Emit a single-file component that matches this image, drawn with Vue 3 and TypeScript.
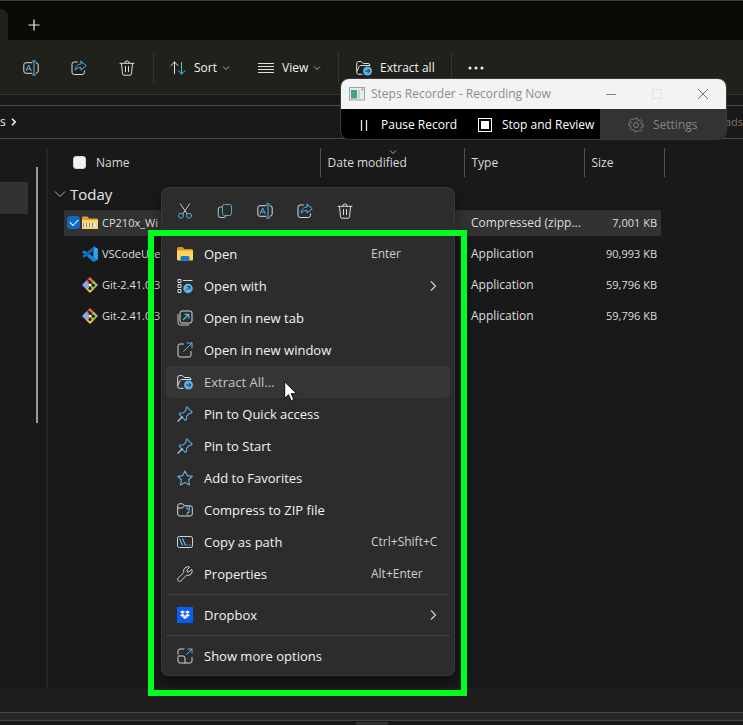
<script setup lang="ts">
import { ref } from 'vue'

interface FileRow {
  name: string
  icon: string
  type: string
  size: string
}

interface MenuEntry {
  label: string
  icon: string
  shortcut?: string
  submenu?: boolean
}

const files: FileRow[] = [
  { name: 'CP210x_Wi', icon: 'zip', type: 'Compressed (zipp...', size: '7,001 KB' },
  { name: 'VSCodeUse', icon: 'vscode', type: 'Application', size: '90,993 KB' },
  { name: 'Git-2.41.0.3', icon: 'git', type: 'Application', size: '59,796 KB' },
  { name: 'Git-2.41.0.3', icon: 'git', type: 'Application', size: '59,796 KB' },
]

const quickActions = [
  { label: 'Cut', icon: 'cut' },
  { label: 'Copy', icon: 'copy' },
  { label: 'Rename', icon: 'rename' },
  { label: 'Share', icon: 'share' },
  { label: 'Delete', icon: 'trash' },
]

const groups: MenuEntry[][] = [
  [
    { label: 'Open', icon: 'folder', shortcut: 'Enter' },
    { label: 'Open with', icon: 'openwith', submenu: true },
    { label: 'Open in new tab', icon: 'newtab' },
    { label: 'Open in new window', icon: 'newwindow' },
    { label: 'Extract All...', icon: 'extract' },
    { label: 'Pin to Quick access', icon: 'pin' },
    { label: 'Pin to Start', icon: 'pin' },
    { label: 'Add to Favorites', icon: 'star' },
    { label: 'Compress to ZIP file', icon: 'compress' },
    { label: 'Copy as path', icon: 'path', shortcut: 'Ctrl+Shift+C' },
    { label: 'Properties', icon: 'wrench', shortcut: 'Alt+Enter' },
  ],
  [{ label: 'Dropbox', icon: 'dropbox', submenu: true }],
  [{ label: 'Show more options', icon: 'more' }],
]

const activeItem = ref('Extract All...')
const selected = ref(0)
</script>

<template>
  <div class="explorer">
    <svg class="sprite" aria-hidden="true">
      <symbol id="i-rename" viewBox="0 0 16 16" fill="none" stroke-linecap="round">
        <path d="M9 2.7H3A2.2 2.2 0 0 0 .8 5v6A2.2 2.2 0 0 0 3 13.3h6M13 2.7a2.2 2.2 0 0 1 2.2 2.3v6a2.2 2.2 0 0 1-2.2 2.3" stroke="#d8dcde" />
        <path d="M3.2 10.7 5.7 5l2.5 5.7M4.1 9h3.2M11 .9v14.2M9.6.9h2.8M9.6 15.1h2.8" stroke="#58b4ea" />
      </symbol>
      <symbol id="i-share" viewBox="0 0 16 16" fill="none" stroke-linejoin="round" stroke-linecap="round">
        <path d="M6.3 2H3.2A2.2 2.2 0 0 0 1 4.2v8A2.2 2.2 0 0 0 3.2 14.5h8a2.2 2.2 0 0 0 2.2-2.2v-1.5" stroke="#d8dcde" />
        <path d="M10 1.2 15.2 5.7 10 10V7.5C7.4 7.4 5.6 8.2 4.2 10.2 4.5 6.6 6.3 4.2 10 3.9z" stroke="#58b4ea" />
      </symbol>
      <symbol id="i-trash" viewBox="0 0 16 16" fill="none" stroke="#dcdcdc" stroke-linecap="round">
        <path d="M1 3.3h14M5.7 3.2a2.3 2.3 0 0 1 4.6 0M2.5 3.5l1 10.3c.1.9.7 1.4 1.5 1.4h6c.8 0 1.4-.5 1.5-1.4l1-10.3M6.5 6.5v5.2M9.5 6.5v5.2" />
      </symbol>
      <symbol id="i-sort" viewBox="0 0 16 16" fill="none" stroke-linecap="round" stroke-linejoin="round">
        <path d="M4.5 13.5V2M1 5.5 4.5 2 8 5.5" stroke="#e4e4e4" />
        <path d="M11.5 2.5V14M8.5 10.8l3 3.2 3.5-3.2" stroke="#4cc2e8" />
      </symbol>
      <symbol id="i-lines" viewBox="0 0 16 16" stroke="#e0e0e0">
        <path d="M0 3.5h16M0 6.5h16M0 9.5h16M0 12.5h16" />
      </symbol>
      <symbol id="i-down" viewBox="0 0 8 8" fill="none" stroke="#a8a8a8">
        <path d="m1 2.5 3 3 3-3" />
      </symbol>
      <symbol id="i-right" viewBox="0 0 12 12" fill="none" stroke="#d0d0d0" stroke-width="1.2">
        <path d="m4 1.5 4.5 4.5L4 10.5" />
      </symbol>
      <symbol id="i-extract" viewBox="0 0 16 16" fill="none" stroke-linejoin="round">
        <path d="M6.5 14.3H2.7A2 2 0 0 1 .7 12.3V3.5a2 2 0 0 1 2-2h2.5l2 2H12a2 2 0 0 1 2 2M.8 11.5 3 6.7C3.3 5.9 4 5.5 4.7 5.5H14" stroke="#dedede" />
        <circle cx="11.5" cy="11" r="4.5" fill="#58b5ed" />
        <path d="M9 11h4.6M11.7 8.9l2.1 2.1-2.1 2.1" stroke="#17364c" />
      </symbol>
      <symbol id="i-cut" viewBox="0 0 16 16" fill="none" stroke-linecap="round">
        <path d="m3.3.8 7 10.2M12.7.8l-7 10.2" stroke="#c8c8c8" />
        <circle cx="4" cy="12.7" r="2.5" stroke="#55ace0" /><circle cx="12" cy="12.7" r="2.5" stroke="#55ace0" />
      </symbol>
      <symbol id="i-copy" viewBox="0 0 16 16" fill="none">
        <path d="M5.5 4H3.3A2 2 0 0 0 1.3 6v6.5a2 2 0 0 0 2 2H7a2 2 0 0 0 1.9-1.7" stroke="#bfc5c8" />
        <rect x="5.5" y="1.5" width="9" height="11" rx="2" stroke="#55a7cc" />
      </symbol>
      <symbol id="i-folder" viewBox="0 0 16 16">
        <path d="M0 2.5A1.5 1.5 0 0 1 1.5 1h4L7.5 3H14.5A1.5 1.5 0 0 1 16 4.5v9H0z" fill="#d99618" />
        <path d="M0 4.5h16v9a1 1 0 0 1-1 1H1a1 1 0 0 1-1-1z" fill="#ffd45b" />
        <path d="M3.5 14.5v-3A1.5 1.5 0 0 1 5 10h6a1.5 1.5 0 0 1 1.5 1.5v3z" fill="#1478d4" />
      </symbol>
      <symbol id="i-openwith" viewBox="0 0 16 16" fill="none">
        <path d="M1 1.5h3v3H1zM1 6.5h3v3H1zM1 11.5h3v3H1zM6 2.5h9.5" stroke="#dadada" />
        <circle cx="11" cy="10.5" r="4.7" fill="#5cb7eb" />
        <path d="M9 12.5 12.7 8.8M10 8.5h3v3" stroke="#193b50" />
      </symbol>
      <symbol id="i-newtab" viewBox="0 0 16 16" fill="none">
        <path d="M1 4v8.5a2.5 2.5 0 0 0 2.5 2.5H12" stroke="#c9c9c9" />
        <rect x="3" y="1" width="12" height="12" rx="2" stroke="#d8d8d8" />
        <path d="m6 10 5.5-5.5M7.5 4.3h4.2v4.2" stroke="#5bb8f0" stroke-width="1.2" />
      </symbol>
      <symbol id="i-newwindow" viewBox="0 0 16 16" fill="none" stroke-linecap="round">
        <path d="M6.5 2H3A2 2 0 0 0 1 4v9a2 2 0 0 0 2 2h9a2 2 0 0 0 2-2V9.5" stroke="#d4d4d4" />
        <path d="M6.5 9.5 15 1M10 1h5v5" stroke="#5bb8f0" />
      </symbol>
      <symbol id="i-pin" viewBox="0 0 16 16" fill="none" stroke-linejoin="round" stroke-linecap="round">
        <path d="m9.8.9 5.3 5.3-1.2 1.2-1.6.1-2.6 2.6-.2 3.2-1.2 1-6.1-6.1 1-1.2 3.2-.2L9 4.200l.100-1.600z" stroke="#5aa9da" stroke-width="1.2" />
        <path d="m5.3 10.800-4.500 4.400" stroke="#c8c8c8" stroke-width="1.2" />
      </symbol>
      <symbol id="i-star" viewBox="0 0 16 16" fill="none" stroke="#64abd2" stroke-linejoin="round">
        <path d="m8 .9 2.2 4.7 5.1.7-3.7 3.5.9 5.2L8 12.500 3.5 15l.9-5.2L.7 6.3l5.1-.7z" stroke-width="1.2" />
      </symbol>
      <symbol id="i-compress" viewBox="0 0 16 16" fill="none">
        <path d="M8.5 14H2.700a2 2 0 0 1-2-2V3.800a2 2 0 0 1 2-2h2.800l2 2h5.800a2 2 0 0 1 2 2V12a2 2 0 0 1-2 2H8.500M.8 6h4.500l2-2.200" stroke="#d8d8d8" />
        <path d="M10 4v3h2v3.500h-1.700V14M12.500 4v3" stroke="#5bb8f0" />
      </symbol>
      <symbol id="i-path" viewBox="0 0 16 16" fill="none">
        <rect x=".5" y="2.5" width="15" height="11" rx="1.8" stroke="#cdd7dd" />
        <path d="m2.5 4.5 3 7M5.5 4.5l3 7M9.5 11h1.5M12.2 11h1.5" stroke="#5bb8f0" stroke-width="1.2" />
      </symbol>
      <symbol id="i-wrench" viewBox="0 0 16 16" fill="none" stroke="#d0d0d0" stroke-linejoin="round">
        <path d="M12.8 1.2A4.3 4.3 0 0 0 6.8 6.5L1.2 12a1.9 1.9 0 0 0 2.7 2.8l5.7-5.6a4.3 4.3 0 0 0 5.2-5.9l-2.7 2.6-2-.1-.1-2z" />
      </symbol>
      <symbol id="i-dropbox" viewBox="0 0 16 16">
        <rect width="16" height="16" fill="#0b5df2" />
        <path d="m5.5 3.5 2.5 1.6-2.5 1.6L3 5.1zM10.5 3.5 13 5.1l-2.5 1.6L8 5.1zM5.5 6.7 8 8.3 5.5 9.9 3 8.3zM10.5 6.7 13 8.3l-2.5 1.6L8 8.3zM8 8.8l2.5 1.6L8 12l-2.5-1.6z" fill="#fff" />
      </symbol>
      <symbol id="i-more" viewBox="0 0 16 16" fill="none" stroke-linecap="round">
        <path d="M7 1H3a2 2 0 0 0-2 2v3M1 9v4a2 2 0 0 0 2 2h10a2 2 0 0 0 2-2V9.5M1.2 8H6a2 2 0 0 1 2 2v4.8" stroke="#d4d4d4" />
        <path d="m9.5 6.5 5.5-5.5M11 1h4v4" stroke="#5bb8f0" />
      </symbol>
      <symbol id="i-zip" viewBox="0 0 16 16">
        <path d="M0 2.5A1 1 0 0 1 1 1.5h4.5l1.5 2H15a1 1 0 0 1 1 1v3H0z" fill="#dba22b" />
        <path d="M0 5h16v9H0z" fill="#fbd469" />
        <path d="M0 8h14v4H0z" fill="#ecebe4" />
        <path d="M1.500 8v4M4.500 8v4M7.500 8v4M10.500 8v4" stroke="#8b7541" />
      </symbol>
      <symbol id="i-vscode" viewBox="0 0 16 16">
        <path d="M11.3.3 15.3 2.2a1 1 0 0 1 .6.9v9.8a1 1 0 0 1-.6.9l-4 1.9z" fill="#2ba5ee" />
        <path d="m.4 5.7 1.2-1.1a.7.7 0 0 1 .9 0L15.8 14l-4.5 1.7L.5 6.5a.6.6 0 0 1-.1-.8z" fill="#1683cc" />
        <path d="m.4 10.300 1.200 1.100c.3.2.6.2.9 0L12 4.500V.3L.5 9.500a.6.6 0 0 0-.1.8z" fill="#0c69ad" />
      </symbol>
      <symbol id="i-git" viewBox="0 0 16 16">
        <path d="M8 0 3.5 4.5 8 8.5l4.500-4z" fill="#ea6a50" />
        <path d="M3.9 4.100 0 8l3.900 3.900L8 8z" fill="#82aee8" />
        <path d="M12.100 4.100 16 8l-3.900 3.900L8 8z" fill="#98c94e" />
        <path d="M3.9 11.900 8 16l4.100-4.100L8 8z" fill="#efc755" />
        <path d="M5.700 2.700 8 5v7M8 5l3.500 3.500" fill="none" stroke="#1d1d1d" stroke-width="1.2" />
        <circle cx="8" cy="5" r="1.5" fill="#1d1d1d" /><circle cx="8" cy="11.5" r="1.6" fill="#1d1d1d" /><circle cx="11.4" cy="8.3" r="1.5" fill="#1d1d1d" />
        <circle cx="8" cy="8" r="1.2" fill="#fff" />
      </symbol>
      <symbol id="i-gear" viewBox="0 0 16 16" fill="none" stroke="#818181">
        <path d="M6.7 1h2.6l.4 1.9 1.2.5 1.7-1.1 1.700 1.800-1.100 1.700.5 1.100 1.900.4v2.400l-1.900.5-.5 1.200 1.100 1.600-1.700 1.700-1.700-1-1.200.5L9.300 15H6.700l-.4-1.800-1.200-.5-1.700 1-1.700-1.700 1.100-1.600-.5-1.200-1.900-.5V6.300l1.900-.4.5-1.100-1.100-1.700 1.700-1.800 1.700 1.100 1.200-.5z" transform="translate(.4 .4) scale(.95)" />
        <circle cx="8" cy="8" r="2.5" />
      </symbol>
    </svg>

    <header class="tabs">
      <div class="tab-edge"></div>
      <button class="plus" aria-label="New tab">
        <svg width="12" height="12" viewBox="0 0 12 12" stroke="#eeeeea" stroke-width="1.2"><path d="M6 .5v11M.5 6h11" /></svg>
      </button>
    </header>

    <nav class="toolbar">
      <button class="tool" aria-label="Rename"><svg class="icon"><use href="#i-rename" /></svg></button>
      <button class="tool" aria-label="Share"><svg class="icon"><use href="#i-share" /></svg></button>
      <button class="tool" aria-label="Delete"><svg class="icon"><use href="#i-trash" /></svg></button>
      <span class="divider"></span>
      <button class="command"><svg class="icon"><use href="#i-sort" /></svg>Sort<svg class="caret"><use href="#i-down" /></svg></button>
      <button class="command"><svg class="icon"><use href="#i-lines" /></svg>View<svg class="caret"><use href="#i-down" /></svg></button>
      <span class="divider flush"></span>
      <button class="command wide"><svg class="icon"><use href="#i-extract" /></svg>Extract all</button>
      <span class="divider"></span>
      <button class="command dots" aria-label="See more">
        <svg class="icon" viewBox="0 0 16 16" fill="#efefef"><circle cx="2" cy="8" r="1.5" /><circle cx="8" cy="8" r="1.5" /><circle cx="14" cy="8" r="1.5" /></svg>
      </button>
    </nav>

    <div class="address">
      <span class="crumb">s</span>
      <svg class="crumb-arrow" width="8" height="8" viewBox="0 0 8 8" fill="none" stroke="#eee" stroke-width="1.6"><path d="m2 .8 3.2 3.2L2 7.2" /></svg>
      <span class="search">ads</span>
    </div>

    <div class="body">
      <aside class="sidebar">
        <div class="side-item"></div>
        <div class="scrollbar"></div>
      </aside>
      <main class="listing">
        <table class="files">
          <colgroup>
            <col class="c-name" /><col class="c-date" /><col class="c-type" /><col class="c-size" />
          </colgroup>
          <thead>
            <tr>
              <th><label class="check-all"><input type="checkbox" aria-label="Select all" /><span>Name</span></label></th>
              <th class="sorted">Date modified<svg class="sort-mark"><use href="#i-down" /></svg></th>
              <th>Type</th>
              <th>Size</th>
            </tr>
          </thead>
          <tbody>
            <tr class="group">
              <td colspan="4">
                <button class="group-toggle">
                  <svg width="12" height="12" viewBox="0 0 12 12" fill="none" stroke="#b0b0b0"><path d="m1 3.5 5 5 5-5" /></svg>Today
                </button>
              </td>
            </tr>
            <tr v-for="(file, i) in files" :key="i" class="file" :class="{ selected: i === selected }">
              <td>
                <div class="name">
                  <span class="box"><input v-if="i === selected" type="checkbox" checked :aria-label="file.name" /></span>
                  <svg class="icon"><use :href="'#i-' + file.icon" /></svg>
                  <span>{{ file.name }}</span>
                </div>
              </td>
              <td></td>
              <td>{{ file.type }}</td>
              <td class="size">{{ file.size }}</td>
            </tr>
          </tbody>
        </table>
      </main>
    </div>
    <footer class="status"></footer>
    <div class="taskbar"><span></span></div>

    <section class="recorder">
      <div class="title">
        <svg width="16" height="16" viewBox="0 0 16 16">
          <rect x=".5" y="1.5" width="15" height="12.5" fill="#e5ecec" stroke="#9aa5a6" />
          <rect x="2" y="4" width="6" height="8.5" fill="#4c9a8c" /><rect x="9" y="4" width="2" height="8.5" fill="#b9d8d3" />
          <circle cx="13.5" cy="3.5" r="1" fill="#c77" />
        </svg>
        <span class="caption">Steps Recorder - Recording Now</span>
        <button aria-label="Minimize"><svg width="12" height="12" stroke="#858585"><path d="M1 6.5h10" /></svg></button>
        <button aria-label="Maximize"><svg width="12" height="12" fill="none" stroke="#e2e2e2"><rect x="1.5" y="1.5" width="9" height="9" /></svg></button>
        <button aria-label="Close"><svg width="12" height="12" stroke="#777"><path d="m1 1 10 10M11 1 1 11" /></svg></button>
      </div>
      <div class="controls">
        <button class="pause"><svg class="icon" viewBox="0 0 16 16" stroke="#e5e5e5" stroke-width="1.3"><path d="M5.5 3v11M10.5 3v11" /></svg>Pause Record</button>
        <button class="stop"><svg class="icon" viewBox="0 0 16 16"><rect x="1.5" y="1.5" width="13" height="13" fill="none" stroke="#fff" /><rect x="4" y="4" width="8" height="8" fill="#fff" /></svg>Stop and Review</button>
        <button class="settings" disabled><svg class="icon"><use href="#i-gear" /></svg>Settings</button>
      </div>
    </section>

    <div class="menu" role="menu">
      <div class="quick">
        <button v-for="a in quickActions" :key="a.icon" :aria-label="a.label"><svg class="icon"><use :href="'#i-' + a.icon" /></svg></button>
      </div>
      <div v-for="(group, g) in groups" :key="g" class="menu-group">
        <button
          v-for="item in group"
          :key="item.label"
          class="item"
          :class="{ active: item.label === activeItem }"
          role="menuitem"
        >
          <svg class="icon"><use :href="'#i-' + item.icon" /></svg>
          <span>{{ item.label }}</span>
          <span v-if="item.shortcut" class="shortcut">{{ item.shortcut }}</span>
          <svg v-if="item.submenu" class="arrow"><use href="#i-right" /></svg>
        </button>
      </div>
    </div>

    <div class="highlight"></div>
    <svg class="cursor" width="14" height="21" viewBox="0 0 14 21"><path d="M.7.8v16.500l3.800-3.600 2.600 6 2.700-1.200-2.600-5.800h5.400z" fill="#fff" stroke="#111" /></svg>
  </div>
</template>

<style>
body {
  margin: 0;
  background: #191919;
}
</style>

<style scoped>
* {
  box-sizing: border-box;
}
.explorer {
  position: relative;
  display: flex;
  flex-direction: column;
  min-height: 100vh;
  overflow: hidden;
  background: #191919;
  color: #e8e8e8;
  font-family: "Open Sans", "Noto Sans", sans-serif;
  font-size: 12px;
  line-height: 16px;
}
button {
  padding: 0;
  border: 0;
  background: none;
  color: inherit;
  font: inherit;
}
svg {
  display: block;
  flex: none;
}
.sprite {
  position: absolute;
  width: 0;
  height: 0;
}
.icon {
  width: 16px;
  height: 16px;
}
.caret {
  width: 8px;
  height: 8px;
}
.tabs {
  display: flex;
  height: 40px;
  border-top: 1px solid #3a4034;
  background: #080a03;
}
.tab-edge {
  width: 8px;
  margin-top: 8px;
  border-radius: 0 7px 0 0;
  background: #20211b;
}
.plus {
  display: grid;
  place-items: center;
  width: 32px;
  margin: 8px 0 0 10px;
  height: 32px;
}
.toolbar {
  display: flex;
  align-items: center;
  height: 55px;
  padding: 2px 0 0 7px;
  border-bottom: 1px solid #35362f;
  background: #20211b;
}
.tool {
  display: grid;
  place-items: center;
  width: 48px;
  height: 32px;
}
.divider {
  width: 1px;
  height: 32px;
  margin: 0 8px 0 2px;
  background: #34352f;
}
.divider.flush {
  margin-left: 0;
}
.command {
  display: flex;
  align-items: center;
  gap: 8px;
  width: 88px;
  height: 32px;
  padding: 0 8px;
  color: #f2f2f2;
}
.command .caret {
  margin-left: -3px;
}
.command.wide {
  width: 102px;
  padding-left: 9px;
}
.address {
  display: flex;
  align-items: center;
  height: 34px;
  margin-top: 10px;
  border-top: 1px solid #4a4a4a;
  border-bottom: 1px solid #4a4a4a;
}
.crumb {
  width: 8px;
}
.crumb-arrow {
  margin-left: 2px;
}
.search {
  margin-left: auto;
  color: #757575;
  font-size: 11px;
}
.body {
  display: flex;
  flex: 1;
  padding-top: 9px;
}
.sidebar {
  display: flex;
  justify-content: space-between;
  width: 48px;
  padding-right: 8px;
  border-right: 2px solid #252525;
}
.side-item {
  width: 28px;
  height: 32px;
  margin-top: 34px;
  background: #323232;
}
.scrollbar {
  width: 2px;
  height: 256px;
  margin-top: 19px;
  background: #9a9a9a;
}
.listing {
  flex: 1;
  padding-left: 16px;
}
.files {
  width: 600px;
  border-collapse: collapse;
  table-layout: fixed;
}
.c-name {
  width: 256px;
}
.c-date {
  width: 144px;
}
.c-type {
  width: 120px;
}
.c-size {
  width: 80px;
}
th,
td {
  padding: 0 7px;
  text-align: left;
  font-weight: 400;
  white-space: nowrap;
}
th {
  height: 29px;
  border-right: 1px solid #515151;
  color: #dadada;
}
.sorted {
  position: relative;
}
.sort-mark {
  position: absolute;
  top: 0;
  left: 68px;
  width: 8px;
  height: 8px;
}
.check-all {
  display: flex;
  align-items: center;
  gap: 10px;
  padding-left: 2px;
}
input {
  appearance: none;
  width: 13px;
  height: 13px;
  margin: 0;
  border: 1px solid #d5d5d5;
  border-radius: 3px;
  background: #f3f3f3;
}
.box input {
  display: grid;
  place-items: center;
  border-color: #1269c4;
  background: #1269c4;
}
.box input::after {
  content: "";
  width: 7px;
  height: 4px;
  border-left: 1px solid #fff;
  border-bottom: 1px solid #fff;
  transform: translateY(-1px) rotate(-45deg);
}
.group td {
  height: 30px;
  padding: 4px 0 0;
}
.group-toggle {
  display: flex;
  align-items: center;
  gap: 4px;
  margin-left: -10px;
  font-size: 15px;
  line-height: 20px;
}
.file td {
  height: 31px;
  color: #dedede;
}
.file.selected {
  background: linear-gradient(#323232, #323232) 0 3px / 597px 26px no-repeat;
}
.name {
  display: flex;
  align-items: center;
  gap: 4px;
  margin-left: -4px;
  font-size: 11px;
}
.box {
  width: 13px;
  margin-right: -2px;
}
.file .size {
  font-size: 11px;
  text-align: right;
}
.status {
  height: 24px;
  background: #1e1e1e;
}
.taskbar {
  display: flex;
  justify-content: center;
  height: 13px;
  border-top: 1px solid #454545;
  background: linear-gradient(#262626 7px, #454545 7px 8px, #171717 8px);
}
.taskbar span {
  width: 32px;
  height: 3px;
  margin-top: 9px;
  background: #303030;
}
.recorder {
  position: absolute;
  top: 79px;
  left: 341px;
  width: 385px;
  overflow: hidden;
  border-radius: 8px;
  background: #000;
  box-shadow: 0 0 0 1px #3a3a3a;
}
.title {
  display: flex;
  align-items: center;
  height: 30px;
  padding-left: 8px;
  background: #f3f3f3;
}
.caption {
  flex: 1;
  padding-left: 6px;
  color: #8b8b8b;
  white-space: nowrap;
}
.title button {
  display: grid;
  place-items: center;
  width: 46px;
  height: 30px;
}
.controls {
  display: flex;
  height: 30px;
}
.controls button {
  display: flex;
  align-items: center;
  gap: 9px;
  padding-top: 2px;
  color: #fff;
  white-space: nowrap;
}
.controls .pause {
  width: 121px;
  padding-left: 15px;
}
.controls .stop {
  width: 138px;
  padding-left: 15px;
}
.controls .settings {
  flex: 1;
  padding-left: 28px;
  background: #333;
  color: #858585;
}
.menu {
  position: absolute;
  top: 187px;
  left: 161px;
  width: 294px;
  padding: 4px 5px;
  border-radius: 8px;
  background: #2c2c2c;
  box-shadow: inset 0 0 0 1px #383838, 0 6px 14px rgba(0, 0, 0, 0.45);
}
.quick {
  display: flex;
  height: 38px;
  padding: 2px 0 0 3px;
}
.quick button {
  display: grid;
  place-items: center;
  width: 32px;
  margin-right: 8px;
}
.menu-group::before {
  content: "";
  display: block;
  height: 1px;
  margin: 4px 0;
  background: #414141;
}
.item {
  display: grid;
  grid-template-columns: 16px 156px 1fr;
  align-items: center;
  column-gap: 11px;
  width: 100%;
  height: 32px;
  padding: 0 11px;
  border-radius: 4px;
  color: #f2f2f2;
  font-size: 13px;
  text-align: left;
  white-space: nowrap;
}
.item.active {
  background: #353535;
  color: #c4c4c4;
}
.shortcut {
  color: #cfcfcf;
  font-size: 12px;
}
.arrow {
  justify-self: end;
  width: 12px;
  height: 12px;
}
.highlight {
  position: absolute;
  top: 230px;
  left: 148px;
  width: 319px;
  height: 466px;
  border: 6px solid #00ff21;
  pointer-events: none;
}
.cursor {
  position: absolute;
  top: 381px;
  left: 284px;
}
</style>
